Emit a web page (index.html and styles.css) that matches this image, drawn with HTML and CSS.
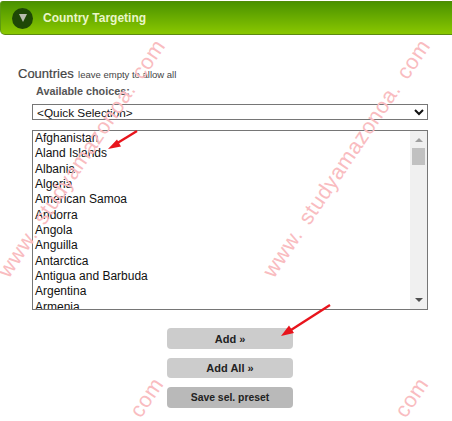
FILE: index.html
```html
<!DOCTYPE html>
<html>
    <head>
        <title>Country Targeting</title>
        <link rel="stylesheet" href="styles.css">
    </head>
    <body>
        <div class="page">
            <div class="header">
                <span class="toggle"><span class="toggleArrow"></span></span>
                <span class="headerTitle">Country Targeting</span>
            </div>
            <div class="content">
                <div class="countriesRow">
                    <span class="countriesLabel">Countries</span>
                    <span class="countriesHint">leave empty to allow all</span>
                </div>
                <div class="choicesLabel">Available choices:</div>
                <select class="quickSelect">
                    <option>&lt;Quick Selection&gt;</option>
                </select>
                <!--Lista de paises con scrollbar dibujada a mano-->
                <div class="countryBox">
                    <div class="countryList">
                        <div class="countryItem">Afghanistan</div>
                        <div class="countryItem">Aland Islands</div>
                        <div class="countryItem">Albania</div>
                        <div class="countryItem">Algeria</div>
                        <div class="countryItem">American Samoa</div>
                        <div class="countryItem">Andorra</div>
                        <div class="countryItem">Angola</div>
                        <div class="countryItem">Anguilla</div>
                        <div class="countryItem">Antarctica</div>
                        <div class="countryItem">Antigua and Barbuda</div>
                        <div class="countryItem">Argentina</div>
                        <div class="countryItem">Armenia</div>
                    </div>
                    <div class="scrollTrack">
                        <span class="scrollUp"></span>
                        <span class="scrollThumb"></span>
                        <span class="scrollDown"></span>
                    </div>
                </div>
                <div class="buttons">
                    <button class="btn">Add »</button>
                    <button class="btn btnAll">Add All »</button>
                    <button class="btn btnDark">Save sel. preset</button>
                </div>
            </div>

            <!--Flechas rojas y marca de agua encima del contenido-->
            <svg class="arrows" width="452" height="421" viewBox="0 0 452 421">
                <line x1="137" y1="131" x2="115" y2="144.5" stroke="#e8141c" stroke-width="2.4"/>
                <polygon points="108,149 117,139.5 121,146.5" fill="#e8141c"/>
                <line x1="330" y1="305" x2="291" y2="330" stroke="#e8141c" stroke-width="2.4"/>
                <polygon points="281,336 289,325.5 294,333" fill="#e8141c"/>
            </svg>
            <div class="mark markLeft">www. studyamazonoa. com</div>
            <div class="mark markRight">www. studyamazonoa. com</div>
            <div class="mark markComLeft">com</div>
            <div class="mark markComRight">com</div>
        </div>
    </body>
</html>
```

FILE: styles.css
```css
html, body
{
    margin: 0;
    padding: 0;
    background-color: white;
}
.page
{
    position: relative;
    width: 452px;
    height: 421px;
    overflow: hidden;
    font-family: "Liberation Sans", Arial, sans-serif;
}
.header
{
    display: flex;
    align-items: center;
    gap: 10px;
    height: 32px;
    margin-top: 1px;
    padding-left: 11px;
    background: linear-gradient(#4a9200, #8ac800);
    border-top: 1px solid #4f8a08;
    border-bottom: 1px solid #5c8a10;
    border-left: 1px solid #5c9a10;
    border-radius: 3px 0 0 5px;
}
.toggle
{
    display: flex;
    align-items: center;
    justify-content: center;
    width: 21px;
    height: 21px;
    border-radius: 50%;
    background-color: #1e4806;
}
.toggleArrow
{
    width: 0;
    height: 0;
    border-left: 4px solid transparent;
    border-right: 4px solid transparent;
    border-top: 8px solid #b8bcae;
}
.headerTitle
{
    font-size: 12px;
    font-weight: bold;
    color: #eaf6c8;
}
.content
{
    display: flex;
    flex-direction: column;
    padding: 30px 24px 0 18px;
}
.countriesRow
{
    height: 15px;
    line-height: 15px;
    white-space: nowrap;
}
.countriesLabel
{
    font-size: 13px;
    color: #444;
    -webkit-text-stroke: 0.2px #444;
}
.countriesHint
{
    font-size: 9.5px;
    color: #444;
}
.choicesLabel
{
    margin: 5px 0 6px 18px;
    height: 13px;
    line-height: 13px;
    font-size: 10.8px;
    font-weight: bold;
    color: #555;
}
.quickSelect
{
    display: block;
    width: 396px;
    height: 16px;
    margin-left: 14px;
    padding: 0;
    font-family: "Liberation Sans", Arial, sans-serif;
    font-size: 11.8px;
    color: #111;
    background-color: white;
    border: 1px solid #767676;
    border-radius: 0;
}
.countryBox
{
    display: flex;
    width: 394px;
    height: 178px;
    margin: 10px 0 0 14px;
    border: 1px solid #767676;
    overflow: hidden;
}
.countryList
{
    flex: 1;
    padding-left: 2px;
    font-size: 12px;
    color: #111;
    overflow: hidden;
}
.countryItem
{
    height: 15.33px;
    line-height: 15.33px;
    white-space: nowrap;
}
.scrollTrack
{
    display: flex;
    flex-direction: column;
    align-items: center;
    width: 17px;
    background-color: #f0f0f0;
}
.scrollUp
{
    width: 0;
    height: 0;
    margin-top: 7px;
    border-left: 4px solid transparent;
    border-right: 4px solid transparent;
    border-bottom: 4px solid #a0a0a0;
}
.scrollThumb
{
    width: 13px;
    height: 17px;
    margin-top: 6px;
    background-color: #c1c1c1;
}
.scrollDown
{
    width: 0;
    height: 0;
    margin-top: auto;
    margin-bottom: 7px;
    border-left: 4px solid transparent;
    border-right: 4px solid transparent;
    border-top: 4px solid #505050;
}
.buttons
{
    display: flex;
    flex-direction: column;
    gap: 9px;
    width: 126px;
    margin: 18px 0 0 149px;
}
.btn
{
    height: 21px;
    padding: 0;
    border: none;
    border-radius: 4px;
    background-color: #ccc;
    font-family: "Liberation Sans", Arial, sans-serif;
    font-size: 11px;
    font-weight: bold;
    color: #222;
}
.btnAll
{
    height: 20px;
}
.btnDark
{
    background-color: #b9b9b9;
    font-size: 10.4px;
}
.arrows
{
    position: absolute;
    left: 0;
    top: 0;
}
.mark
{
    position: absolute;
    font-family: "Liberation Sans", Arial, sans-serif;
    font-size: 21.5px;
    letter-spacing: 0.5px;
    word-spacing: 4px;
    line-height: 24px;
    color: #f9bcc0;
    white-space: nowrap;
    transform-origin: 0 50%;
    transform: rotate(-56deg);
    pointer-events: none;
}
.markLeft
{
    left: 3px;
    top: 263px;
}
.markRight
{
    left: 268px;
    top: 263px;
}
.markComLeft
{
    left: 135px;
    top: 403px;
}
.markComRight
{
    left: 400px;
    top: 403px;
}
```
